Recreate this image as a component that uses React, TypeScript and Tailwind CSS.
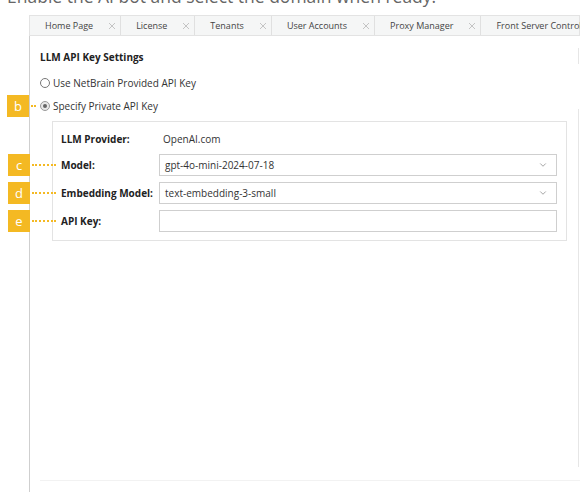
import { ChevronDown } from "lucide-react";

const tabs = [
  "Home Page",
  "License",
  "Tenants",
  "User Accounts",
  "Proxy Manager",
  "Front Server Control",
];

function CloseX() {
  return (
    <svg width="8" height="8" viewBox="0 0 8 8" className="shrink-0">
      <path d="M1 1L7 7M7 1L1 7" stroke="#c4c4c4" strokeWidth="1" />
    </svg>
  );
}

// yellow callout square with a dotted leader line
function Badge({ letter, left, lead }: { letter: string; left: number; lead: number }) {
  return (
    <div className="absolute top-1/2 -translate-y-1/2 flex items-center" style={{ left }}>
      <div className="w-[22px] h-[22px] bg-[#f4b923] text-white text-[13px] leading-none flex items-center justify-center">
        {letter}
      </div>
      <div className="ml-[2px] border-t-2 border-dotted border-[#f4b923]" style={{ width: lead }} />
    </div>
  );
}

function Radio({ checked }: { checked?: boolean }) {
  return (
    <span
      className={
        "w-[10px] h-[10px] rounded-full border shrink-0 flex items-center justify-center " +
        (checked ? "border-[#9a9a9a] bg-[#e8e8e8]" : "border-[#777] bg-white")
      }
    >
      {checked && <span className="w-[4px] h-[4px] rounded-full bg-[#666]" />}
    </span>
  );
}

function Field({ value, select }: { value?: string; select?: boolean }) {
  return (
    <div className="flex-1 h-[22px] border border-[#cfcfcf] bg-white flex items-center pl-[5px] pr-[8px]">
      <span className="flex-1 text-[10px] text-[#333]">{value}</span>
      {select && <ChevronDown size={10} strokeWidth={1.6} className="text-[#777]" />}
    </div>
  );
}

export default function App() {
  return (
    <div
      className="w-[580px] h-[492px] overflow-hidden bg-white"
      style={{ fontFamily: '"Open Sans", "Liberation Sans", sans-serif' }}
    >
      <p className="-mt-[14px] pl-[7px] text-[17.5px] leading-[20px] text-[#666] whitespace-nowrap">
        Enable the AI bot and select the domain when ready.
      </p>

      <div className="mt-[9px] ml-[29px] h-[21px] flex bg-[#f5f6f6] border border-[#e3e3e3] whitespace-nowrap">
        {tabs.map((t) => (
          <div
            key={t}
            className="flex items-center gap-[15px] pl-[15px] pr-[4px] border-r border-[#e0e0e0] text-[9px] text-[#444]"
          >
            <span>{t}</span>
            <CloseX />
          </div>
        ))}
      </div>

      <div className="ml-[29px] h-[457px] border-l-[1.5px] border-[#cfcfcf] flex flex-col">
        <div className="h-[431px] flex">
          <div className="flex-1 pl-[10px] pt-[14px] text-[#222]">
            <div className="h-[14px] leading-[14px] text-[10px] font-bold">LLM API Key Settings</div>

            <div className="mt-[12px] h-[14px] flex items-center gap-[3px] text-[10px] text-[#333]">
              <Radio />
              <span>Use NetBrain Provided API Key</span>
            </div>

            <div className="relative mt-[9px] h-[14px] flex items-center gap-[3px] text-[10px] text-[#333]">
              <Badge letter="b" left={-33} lead={3} />
              <Radio checked />
              <span>Specify Private API Key</span>
            </div>

            <div className="mt-[8px] ml-[12px] mr-[11px] border border-[#e3e3e3] pt-[10px] pb-[8px] pl-[8px] pr-[9px]">
              <div className="h-[14px] flex items-center text-[10px]">
                <span className="w-[102px] font-bold">LLM Provider:</span>
                <span className="text-[#333]">OpenAI.com</span>
              </div>

              <div className="relative mt-[8px] flex items-center text-[10px]">
                <Badge letter="c" left={-53} lead={24} />
                <span className="w-[98px] font-bold">Model:</span>
                <Field value="gpt-4o-mini-2024-07-18" select />
              </div>

              <div className="relative mt-[6px] flex items-center text-[10px]">
                <Badge letter="d" left={-53} lead={24} />
                <span className="w-[98px] font-bold">Embedding Model:</span>
                <Field value="text-embedding-3-small" select />
              </div>

              <div className="relative mt-[6px] flex items-center text-[10px]">
                <Badge letter="e" left={-53} lead={24} />
                <span className="w-[98px] font-bold">API Key:</span>
                <Field />
              </div>
            </div>
          </div>

          <div className="w-[2px] flex flex-col">
            <div className="mt-[12px] h-[16px] border-l border-[#e6e6e6]" />
            <div className="mt-[45px] h-[358px] border-l border-[#e6e6e6]" />
          </div>
        </div>

        <div className="mt-[13px] ml-[10px] h-px bg-[#f2f2f2]" />
      </div>
    </div>
  );
}
